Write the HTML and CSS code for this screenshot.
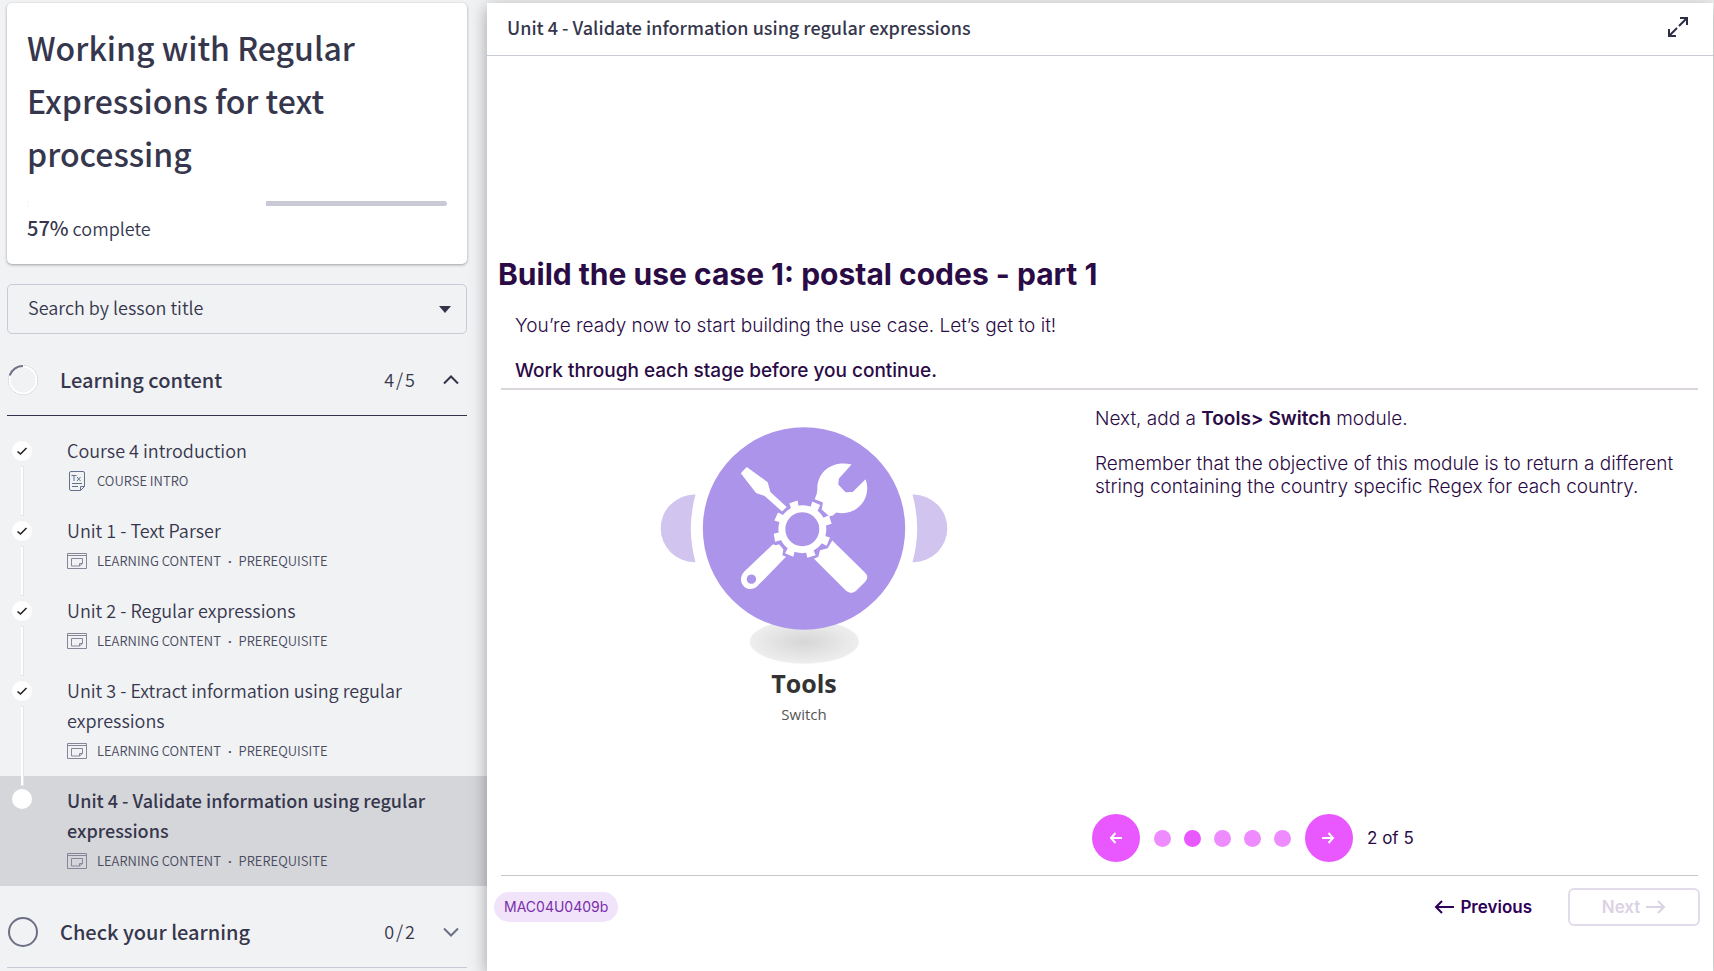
FILE: index.html
```html
<!DOCTYPE html>
<html lang="en">
<head>
<meta charset="utf-8">
<title>Working with Regular Expressions for text processing</title>
<link rel="stylesheet" href="styles.css">
</head>
<body>
<svg class="defs" aria-hidden="true">
  <symbol id="i-check" viewBox="0 0 20 20"><path d="M5.500 10.500 8.500 13 14.500 7" fill="none" stroke="#222" stroke-width="1.600"/></symbol>
  <symbol id="i-lesson" viewBox="0 0 20 16"><g fill="none" stroke="#85869a"><path d="M.5.5h19v15H.5zM.5 2.500h19"/><path d="M4.500 5.500h11v5l-3 2.500h-8zM12.500 13v-2.500h3"/></g></symbol>
  <symbol id="i-text" viewBox="0 0 16 20"><g fill="none" stroke="#62728c"><path d="M2 .5h12q1.500 0 1.500 1.500v13.500l-4 4H2q-1.500 0-1.500-1.500V2Q.5.5 2 .5zM11.500 19.500v-4h4M3 12.500h10M3 15.500h6"/><path d="M2.500 4.500h5M5 4.500V10M8 6l3.500 4M11.500 6 8 10"/></g></symbol>
</svg>
<div class="app">
  <aside class="sidebar">
    <section class="card">
      <h1 class="course-title">Working with Regular Expressions for text processing</h1>
      <div class="track" role="progressbar" aria-label="Course progress" aria-valuenow="57" aria-valuemin="0" aria-valuemax="100"><div class="fill" style="width:57%"></div></div>
      <p class="complete"><strong>57%</strong> complete</p>
    </section>
    <div class="search">
      <select class="search-select" aria-label="Search by lesson title"><option>Search by lesson title</option></select>
      <svg class="caret" viewBox="0 0 12 7" aria-hidden="true"><path d="M0 0h12L6 7z" fill="#33344a"/></svg>
    </div>
    <button class="section open" type="button" aria-expanded="true">
      <svg class="ring" viewBox="0 0 30 30" aria-hidden="true"><circle cx="15" cy="15" r="14.500" fill="none" stroke="#b9bac4" stroke-dasharray="2 1"/><circle cx="15" cy="15" r="13.500" fill="none" stroke="#fff" stroke-width="2"/><path d="M1.700 10.500A14 14 0 0 1 15 1" fill="none" stroke="#6d6f84" stroke-width="2"/></svg>
      <span class="section-name">Learning content</span><span class="count">4<span class="slash">/</span>5</span>
      <svg class="chev" viewBox="0 0 16 10" aria-hidden="true"><path d="M1 8.500 8 1.500l7 7" fill="none" stroke="#33344a" stroke-width="2"/></svg>
    </button>
    <ol class="lessons">
      <li class="lesson">
        <span class="rail"><svg class="dot" aria-hidden="true"><use href="#i-check"/></svg><i class="line"></i></span>
        <a class="link" href="#intro"><span class="name">Course 4 introduction</span><span class="meta"><svg class="m-text" aria-hidden="true"><use href="#i-text"/></svg>COURSE INTRO</span></a>
      </li>
      <li class="lesson">
        <span class="rail"><svg class="dot" aria-hidden="true"><use href="#i-check"/></svg><i class="line"></i></span>
        <a class="link" href="#u1"><span class="name">Unit 1 - Text Parser</span><span class="meta"><svg class="m-lesson" aria-hidden="true"><use href="#i-lesson"/></svg>LEARNING CONTENT <span class="sep">·</span> PREREQUISITE</span></a>
      </li>
      <li class="lesson">
        <span class="rail"><svg class="dot" aria-hidden="true"><use href="#i-check"/></svg><i class="line"></i></span>
        <a class="link" href="#u2"><span class="name">Unit 2 - Regular expressions</span><span class="meta"><svg class="m-lesson" aria-hidden="true"><use href="#i-lesson"/></svg>LEARNING CONTENT <span class="sep">·</span> PREREQUISITE</span></a>
      </li>
      <li class="lesson">
        <span class="rail"><svg class="dot" aria-hidden="true"><use href="#i-check"/></svg><i class="line"></i></span>
        <a class="link" href="#u3"><span class="name">Unit 3 - Extract information using regular expressions</span><span class="meta"><svg class="m-lesson" aria-hidden="true"><use href="#i-lesson"/></svg>LEARNING CONTENT <span class="sep">·</span> PREREQUISITE</span></a>
      </li>
      <li class="lesson current">
        <span class="rail"><svg class="dot" aria-hidden="true"></svg></span>
        <a class="link" href="#u4" aria-current="page"><span class="name">Unit 4 - Validate information using regular expressions</span><span class="meta"><svg class="m-lesson" aria-hidden="true"><use href="#i-lesson"/></svg>LEARNING CONTENT <span class="sep">·</span> PREREQUISITE</span></a>
      </li>
    </ol>
    <button class="section" type="button" aria-expanded="false">
      <svg class="ring" viewBox="0 0 30 30" aria-hidden="true"><circle cx="15" cy="15" r="14" fill="none" stroke="#6d6f84" stroke-width="2"/></svg>
      <span class="section-name">Check your learning</span><span class="count">0<span class="slash">/</span>2</span>
      <svg class="chev" viewBox="0 0 16 10" aria-hidden="true"><path d="M1 1.500l7 7 7-7" fill="none" stroke="#6d6f84" stroke-width="2"/></svg>
    </button>
  </aside>

  <main class="main">
    <header class="bar">
      <h2 class="bar-title">Unit 4 - Validate information using regular expressions</h2>
      <button class="expand" type="button" aria-label="Full screen"><svg viewBox="0 0 20 20" aria-hidden="true"><path d="M12 1h7v7M18.500 1.500 11 9M8 19H1v-7M1.500 18.500 9 11" fill="none" stroke="#2d2e45" stroke-width="2"/></svg></button>
    </header>
    <article class="slide">
      <h3 class="heading">Build the use case 1: postal codes - part 1</h3>
      <div class="intro">
        <p>You’re ready now to start building the use case. Let’s get to it!</p>
        <p class="strong">Work through each stage before you continue.</p>
      </div>
      <div class="columns">
        <figure class="module">
          <svg class="art" viewBox="60 80 864 712" role="img" aria-label="Tools module">
            <defs><radialGradient id="shade"><stop offset="0" stop-color="#d6d6d6"/><stop offset="1" stop-color="#eee"/></radialGradient></defs>
            <ellipse cx="493" cy="725" rx="164" ry="66" fill="url(#shade)"/>
            <path d="M166 283H163A101 101 0 0 0 163 486H166Q138 385 166 283zM818 283H821A101 101 0 0 1 821 486H818Q846 385 818 283z" fill="#d1c4ef"/>
            <circle cx="492" cy="385" r="304" fill="#ab94ea"/>
            <g fill="#fff">
              <path d="M320 200 302 219 348 278 374 287 426 334 440 320 391 275 383 246z"/>
              <path d="M635 193C580 178 532 213 532 265Q533 280 524 297L549 307 545 328 568 348 579 346 589 337C640 348 682 310 682 265Q682 250 677 237L638 275 617 276 595 253 597 235z"/>
              <path fill-rule="evenodd" d="M399 432 312 515C286 545 320 582 350 560L438 470 427 465 430 448 417 432 407 435zM334 523a14 14 0 1 0 .1 0z"/>
              <path d="M577 421 675 517Q689 531 676 545L648 573Q634 584 619 573L522 476 535 470 540 450 563 444z"/>
              <g>
                <path d="M448 309 473 301 477 328 456 334z"/><path d="M517 304 541 314 530 337 509 328z"/>
                <path d="M567 345 575 371 551 378 545 355z"/><path d="M570 412 560 437 539 426 548 405z"/>
                <path d="M527 465 502 473 496 448 517 441z"/><path d="M460 470 435 459 448 435 466 444z"/>
                <path d="M405 425 401 401 426 395 432 417z"/><path d="M403 361 414 337 438 349 429 369z"/>
              </g>
              <path fill-rule="evenodd" d="M487 315a72 72 0 1 0 .1 0zM487 336a51 51 0 1 1-.1 0z"/>
            </g>
          </svg>
          <figcaption class="caption"><b class="cap-title">Tools</b><span class="cap-sub">Switch</span></figcaption>
        </figure>
        <div class="steps">
          <div class="copy">
            <p>Next, add a <b>Tools&gt; Switch</b> module.</p>
            <p>Remember that the objective of this module is to return a different string containing the country specific Regex for each country.</p>
          </div>
          <nav class="pager" aria-label="Stages">
            <button class="round" type="button" aria-label="Previous stage"><svg viewBox="0 0 14 12" aria-hidden="true"><path d="M13 6H2M6.500 1 2 6l4.500 5" fill="none" stroke="#fff" stroke-width="2"/></svg></button>
            <span class="pips">
              <button class="pip" type="button" aria-label="Stage 1"></button><button class="pip on" type="button" aria-label="Stage 2"></button><button class="pip" type="button" aria-label="Stage 3"></button><button class="pip" type="button" aria-label="Stage 4"></button><button class="pip" type="button" aria-label="Stage 5"></button>
            </span>
            <button class="round" type="button" aria-label="Next stage"><svg viewBox="0 0 14 12" aria-hidden="true"><path d="M0 6h11M6.500 1 11 6l-4.500 5" fill="none" stroke="#fff" stroke-width="2"/></svg></button>
            <span class="pos">2 of 5</span>
          </nav>
        </div>
      </div>
      <footer class="foot">
        <span class="tag">MAC04U0409b</span>
        <div class="actions">
          <button class="btn prev" type="button"><svg viewBox="0 0 20 14" aria-hidden="true"><path d="M20 7H2M8 1 2 7l6 6" fill="none" stroke="currentColor" stroke-width="2"/></svg>Previous</button>
          <button class="btn next" type="button" disabled>Next<svg viewBox="0 0 20 14" aria-hidden="true"><path d="M0 7h18M12 1l6 6-6 6" fill="none" stroke="currentColor" stroke-width="2"/></svg></button>
        </div>
      </footer>
    </article>
  </main>
</div>
</body>
</html>
```
FILE: styles.css
```css
* { box-sizing: border-box; }
body {
  margin: 0;
  background: #f1f2f4;
  color: #36374d;
  font-family: "Noto Sans CJK SC", "Noto Sans", sans-serif;
  font-size: 18px;
  font-weight: 350;
  overflow: hidden;
}
h1, h2, h3, p, ol, figure { margin: 0; padding: 0; }
button { font: inherit; color: inherit; background: none; border: 0; padding: 0; }
.defs { display: none; }
.app { display: flex; min-height: 100vh; }

/* Sidebar */
.sidebar { flex: 0 0 487px; height: 100vh; overflow: hidden; padding-top: 3px; }
.card {
  margin: 0 20px 20px 7px;
  padding: 18px 20px 20px;
  background: #fff;
  border-radius: 5px;
  box-shadow: 0 1px 3px rgba(0, 0, 0, .35);
}
.course-title { font-size: 32px; line-height: 53px; font-weight: 500; }
.track { height: 5px; margin: 21px 0 7px; border-radius: 3px; background: #c9cad6; overflow: hidden; }
.fill { height: 100%; background: #fff; }
.complete { line-height: 30px; padding-bottom: 1px; }
.complete strong { font-size: 20px; font-weight: 500; }
.search { position: relative; margin: 0 20px 11px 7px; }
.search-select {
  appearance: none;
  display: block;
  width: 100%;
  height: 50px;
  padding: 0 20px 4px;
  border: 1px solid #c9cad6;
  border-radius: 5px;
  background: #f1f2f4;
  color: inherit;
  font: inherit;
}
.caret { position: absolute; right: 16px; top: 22px; width: 12px; height: 7px; }
.section {
  display: flex;
  align-items: center;
  width: 460px;
  height: 71px;
  margin-left: 7px;
  padding: 0 8px 0 1px;
  border-bottom: 1px solid #c9cad6;
  text-align: left;
}
.section.open { border-color: #33344a; }
.ring { width: 30px; height: 30px; }
.section-name { flex: 1; margin-left: 22px; padding-bottom: 2px; font-size: 20px; font-weight: 500; }
.count { padding-bottom: 2px; }
.slash { margin: 0 2px; }
.chev { width: 16px; height: 10px; margin-left: 28px; }
.lessons { list-style: none; padding: 10px 0 11px; }
.lesson { display: flex; }
.lesson.current { background: #d5d6da; }
.rail { display: flex; flex-direction: column; align-items: center; gap: 5px; width: 20px; margin: 15px 35px -10px 12px; }
.current .rail { margin-top: 13px; margin-bottom: 0; }
.dot { flex: none; width: 20px; height: 20px; border-radius: 50%; background: #fff; }
.line { flex: 1; width: 3px; background: #fff; border: solid #e3e4e8; border-width: 1px 1px 1px 0; position: relative; }
.link { flex: 1; padding: 9px 40px 10px 0; color: inherit; text-decoration: none; line-height: 30px; }
.name { display: block; padding-bottom: 1px; }
.current .name { font-weight: 500; }
.meta { display: flex; align-items: center; font-size: 13px; color: #4a4b60; }
.sep { margin: 0 7px; font-family: "Noto Sans", sans-serif; font-weight: 700; }
.m-text { width: 16px; height: 20px; margin: 0 12px 0 2px; }
.m-lesson { width: 20px; height: 16px; margin-right: 10px; }

/* Main pane */
.main {
  flex: 1;
  display: flex;
  flex-direction: column;
  min-width: 0;
  margin: 3px 1px 0 0;
  background: #fff;
  box-shadow: 0 4px 16px rgba(0, 0, 0, .35);
}
.bar {
  display: flex;
  align-items: center;
  justify-content: space-between;
  height: 53px;
  padding: 0 25px 4px 20px;
  border-bottom: 1px solid #c9cad6;
}
.bar-title { font-size: 18px; font-weight: 500; }
.expand svg { display: block; width: 20px; height: 20px; }
.slide {
  flex: 1;
  display: flex;
  flex-direction: column;
  padding: 193px 15px 0 14px;
  color: #2a0b45;
  font-family: Inter, sans-serif;
}
.heading { margin-left: -3px; font-size: 30px; line-height: 50px; font-weight: 700; }
.intro { padding: 16px 14px 6px; line-height: 22px; }
.intro, .copy { font-size: 19px; font-weight: 300; }
.intro p + p { margin-top: 23px; }
.intro .strong { font-weight: 500; }
.columns { display: grid; grid-template-columns: 594px 1fr; border-top: 2px solid #d9d5da; border-bottom: 1px solid #c9c5ca; }
.module { display: flex; flex-direction: column; align-items: center; padding: 37px 0 0 12px; }
.art { width: 288px; height: 237px; overflow: visible; }
.caption { display: flex; flex-direction: column; align-items: center; font-family: "Open Sans", sans-serif; font-weight: 400; color: #333; }
.cap-title { font-size: 25px; line-height: 38px; }
.cap-sub { font-size: 15px; line-height: 24px; color: #555; }
.steps { display: flex; flex-direction: column; justify-content: space-between; height: 485px; padding-bottom: 13px; }
.copy { padding: 17px 20px 0 0; line-height: 23px; }
.copy p + p { margin-top: 22px; }
.copy b { font-weight: 600; }
.pager { display: flex; align-items: center; margin-left: -3px; }
.round { display: grid; place-items: center; width: 48px; height: 48px; border-radius: 50%; background: #e957ff; }
.round svg { width: 14px; height: 12px; }
.pips { display: flex; gap: 13px; margin: 0 14px; }
.pip { width: 17px; height: 17px; border-radius: 50%; background: #ee8bff; }
.pip.on { background: #e957ff; }
.pos { margin-left: 14px; font-size: 17px; font-weight: 400; }
.foot { display: flex; align-items: center; justify-content: space-between; margin: 12px -2px 0 -7px; }
.tag { padding: 0 10px; border-radius: 15px; background: #f0e3fa; color: #7a2fa8; font-size: 14px; line-height: 30px; font-weight: 400; }
.actions { display: flex; gap: 36px; }
.btn { display: flex; align-items: center; gap: 6px; height: 38px; font-size: 17px; font-weight: 600; color: #2f0057; }
.btn svg { width: 20px; height: 14px; }
.next { justify-content: center; width: 132px; border: 2px solid #e2dcea; border-radius: 6px; color: #dbd2e4; }
```
